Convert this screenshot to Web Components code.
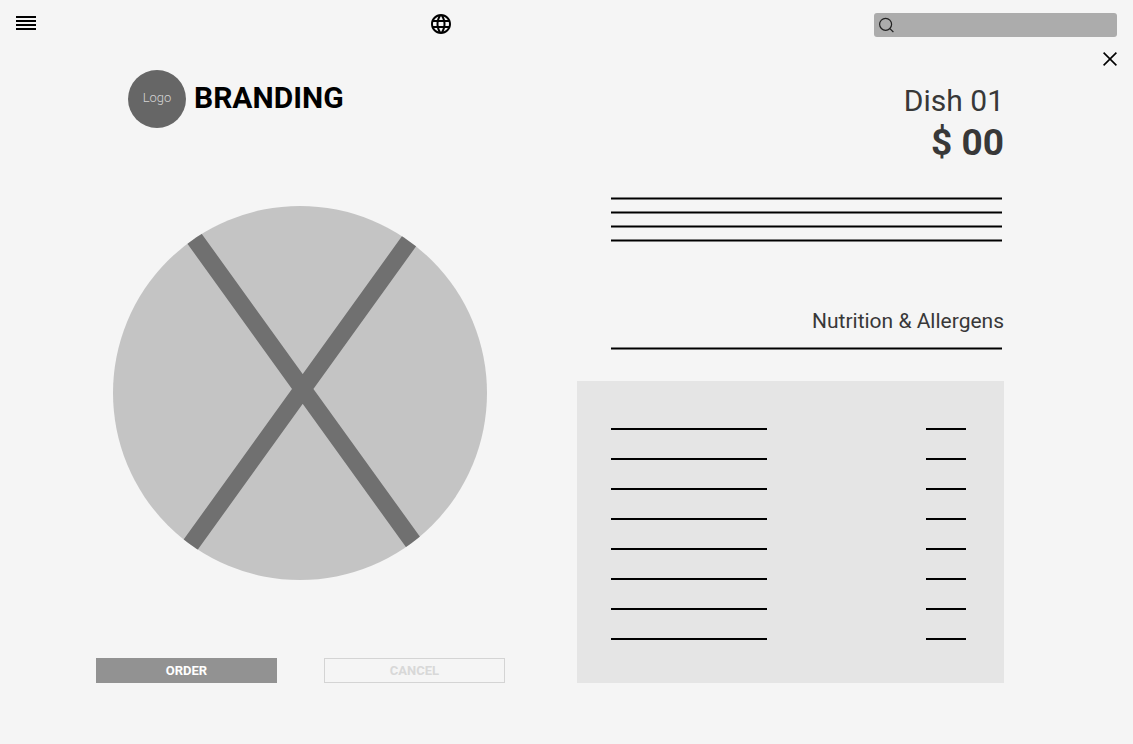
<!DOCTYPE html>
<html lang="en">
<head>
  <meta charset="utf-8">
  <meta name="viewport" content="width=device-width, initial-scale=1">
  <title>Dish 01</title>
  <style>
    body {
      margin: 0;
      background: #f5f5f5;
      color: #383838;
      font-family: Roboto, "Liberation Sans", sans-serif;
    }
  </style>
</head>
<body>
  <dish-page></dish-page>

  <script>
    class TopBar extends HTMLElement {
      constructor() {
        super();
        this.attachShadow({ mode: 'open' });
        this.render();
      }

      render() {
        this.shadowRoot.innerHTML = `
          <style>
            :host {
              display: grid;
              grid-template-columns: 415fr 443fr 243px;
              padding: 13px 16px 0;
            }
            button {
              display: block;
              width: 20px;
              height: 20px;
              padding: 0;
              border: 0;
              background: none;
              color: #000;
              cursor: pointer;
            }
            svg {
              display: block;
            }
            .search {
              display: flex;
              align-items: center;
              gap: 4px;
              height: 24px;
              box-sizing: border-box;
              padding: 0 4px;
              border-radius: 3px;
              background: #acacac;
            }
            input {
              flex: 1;
              min-width: 0;
              padding: 0;
              border: 0;
              outline: 0;
              background: none;
              font: 14px/20px Roboto, sans-serif;
            }
          </style>
          <button type="button" aria-label="Menu">
            <svg width="20" height="20" viewBox="0 0 20 20">
              <path d="M0 3h20v2H0zM0 7h20v2H0zM0 11h20v2H0zM0 15h20v2H0z"/>
            </svg>
          </button>
          <button type="button" aria-label="Language">
            <svg width="20" height="22" viewBox="2 1 20 22">
              <path d="M11.99 2C6.47 2 2 6.48 2 12s4.47 10 9.99 10C17.52 22 22 17.52 22 12S17.52 2 11.99 2zm6.93 6h-2.95a15.65 15.65 0 0 0-1.38-3.56A8.03 8.03 0 0 1 18.92 8zM12 4.04c.83 1.2 1.48 2.53 1.91 3.96h-3.82c.43-1.43 1.08-2.76 1.91-3.96zM4.26 14C4.1 13.36 4 12.69 4 12s.1-1.36.26-2h3.38c-.08.66-.14 1.32-.14 2s.06 1.34.14 2H4.26zm.82 2h2.95c.32 1.25.78 2.45 1.38 3.56A7.99 7.99 0 0 1 5.08 16zm2.95-8H5.08a7.99 7.99 0 0 1 4.33-3.56A15.65 15.65 0 0 0 8.03 8zM12 19.96c-.83-1.2-1.48-2.53-1.91-3.96h3.82c-.43 1.43-1.08 2.76-1.91 3.96zM14.34 14H9.66c-.09-.66-.16-1.32-.16-2s.07-1.35.16-2h4.68c.09.65.16 1.32.16 2s-.07 1.34-.16 2zm.25 5.56c.6-1.11 1.06-2.31 1.38-3.56h2.95a8.03 8.03 0 0 1-4.33 3.56zM16.36 14c.08-.66.14-1.32.14-2s-.06-1.34-.14-2h3.38c.16.64.26 1.31.26 2s-.1 1.36-.26 2h-3.38z"/>
            </svg>
          </button>
          <label class="search">
            <svg width="16" height="16" viewBox="0 0 16 16" fill="none" stroke="#222" stroke-width="1.2">
              <circle cx="7.6" cy="7.3" r="6"/>
              <path d="M11.8 11.6L15.4 15"/>
            </svg>
            <input type="search" aria-label="Search">
          </label>
        `;
      }
    }

    class BrandMark extends HTMLElement {
      constructor() {
        super();
        this.attachShadow({ mode: 'open' });
        this.render();
      }

      render() {
        this.shadowRoot.innerHTML = `
          <style>
            :host {
              display: flex;
              gap: 8px;
              height: 58px;
              padding-left: 32px;
              line-height: 56px;
            }
            .logo {
              width: 58px;
              border-radius: 50%;
              background: #666;
              color: #d4d4d4;
              font-size: 13px;
              font-weight: 300;
              text-align: center;
            }
            .name {
              color: #000;
              font-size: 30px;
              font-weight: 700;
            }
          </style>
          <span class="logo">Logo</span>
          <span class="name"><slot></slot></span>
        `;
      }
    }

    class DishPicture extends HTMLElement {
      constructor() {
        super();
        this.attachShadow({ mode: 'open' });
        this.render();
      }

      render() {
        this.shadowRoot.innerHTML = `
          <style>
            :host {
              display: block;
              padding: 0 17px;
            }
            svg {
              display: block;
              width: 100%;
              max-width: 374px;
            }
          </style>
          <svg viewBox="0 0 374 374" role="img" aria-label="Dish picture">
            <clipPath id="plate"><circle cx="187" cy="187" r="187"/></clipPath>
            <circle cx="187" cy="187" r="187" fill="#c4c4c4"/>
            <path clip-path="url(#plate)" fill="none" stroke="#707070" stroke-width="17.4"
              d="M60.1 3L321.4 365.7M317.6 5.3L56.6 367.9"/>
          </svg>
        `;
      }
    }

    class ActionButton extends HTMLElement {
      constructor() {
        super();
        this.attachShadow({ mode: 'open' });
        this.render();
      }

      render() {
        this.shadowRoot.innerHTML = `
          <style>
            :host {
              display: block;
            }
            button {
              display: block;
              width: 100%;
              height: 25px;
              padding: 0;
              border: 1px solid #929292;
              background: #929292;
              color: #fff;
              font: 700 13px/23px Roboto, "Liberation Sans", sans-serif;
              cursor: pointer;
            }
            :host([outline]) button {
              border-color: #d4d4d4;
              background: none;
              color: #d8d8d8;
            }
          </style>
          <button type="button"><slot></slot></button>
        `;
      }
    }

    // Block of placeholder text lines
    class TextLines extends HTMLElement {
      constructor() {
        super();
        this.attachShadow({ mode: 'open' });
        this.render();
      }

      render() {
        const count = Number(this.getAttribute('count')) || 1;
        this.shadowRoot.innerHTML = `
          <style>
            :host {
              display: grid;
              gap: 11px;
              padding: 0 2px 0 34px;
            }
            .line {
              height: 1px;
              border: solid #7a7a7a;
              border-width: 1px 0;
              background: #000;
            }
          </style>
          ${'<div class="line"></div>'.repeat(count)}
        `;
      }
    }

    class NutritionPanel extends HTMLElement {
      constructor() {
        super();
        this.rows = 8;
        this.attachShadow({ mode: 'open' });
        this.render();
      }

      render() {
        this.shadowRoot.innerHTML = `
          <style>
            :host {
              display: grid;
              gap: 28px;
              padding: 47px 38px 43px 34px;
              background: #e5e5e5;
            }
            .row {
              display: flex;
              justify-content: space-between;
            }
            .label, .value {
              width: 156px;
              height: 2px;
              background: #000;
            }
            .value {
              width: 40px;
            }
          </style>
          ${Array.from({ length: this.rows }, () => this.renderRow()).join('')}
        `;
      }

      renderRow() {
        return `
          <div class="row">
            <span class="label"></span>
            <span class="value"></span>
          </div>
        `;
      }
    }

    class DishPage extends HTMLElement {
      constructor() {
        super();
        this.attachShadow({ mode: 'open' });
        this.render();
      }

      render() {
        this.shadowRoot.innerHTML = `
          <style>
            :host {
              display: block;
            }
            .close {
              display: block;
              margin: 15px 16px 4px auto;
              padding: 0;
              border: 0;
              background: none;
              cursor: pointer;
            }
            svg {
              display: block;
            }
            main {
              display: grid;
              grid-template-columns: 409fr 427fr;
              gap: 72px;
              padding: 0 129px 61px 96px;
            }
            dish-picture {
              margin: 78px 0;
            }
            .actions {
              display: grid;
              grid-template-columns: 1fr 1fr;
              gap: 47px;
            }
            h1, h2, .price {
              margin: 0;
              text-align: right;
            }
            h1 {
              padding-top: 11px;
              font-size: 30px;
              font-weight: 400;
              line-height: 40px;
            }
            .price {
              margin-bottom: 32px;
              font-size: 37px;
              font-weight: 700;
              line-height: 44px;
            }
            h2 {
              margin: 65px 0 12px;
              font-size: 21px;
              font-weight: 400;
              line-height: 28px;
            }
            nutrition-panel {
              margin-top: 31px;
            }
          </style>
          <top-bar></top-bar>
          <button class="close" type="button" aria-label="Close">
            <svg width="14" height="14" viewBox="0 0 14 14" stroke="#000" stroke-width="1.6">
              <path d="M.6 .6l12.8 12.8M13.4 .6L.6 13.4"/>
            </svg>
          </button>
          <main>
            <section>
              <brand-mark>BRANDING</brand-mark>
              <dish-picture></dish-picture>
              <div class="actions">
                <action-button>ORDER</action-button>
                <action-button outline>CANCEL</action-button>
              </div>
            </section>
            <section>
              <h1>Dish 01</h1>
              <p class="price">$ 00</p>
              <text-lines count="4"></text-lines>
              <h2>Nutrition &amp; Allergens</h2>
              <text-lines></text-lines>
              <nutrition-panel></nutrition-panel>
            </section>
          </main>
        `;
      }
    }

    customElements.define('top-bar', TopBar);
    customElements.define('brand-mark', BrandMark);
    customElements.define('dish-picture', DishPicture);
    customElements.define('action-button', ActionButton);
    customElements.define('text-lines', TextLines);
    customElements.define('nutrition-panel', NutritionPanel);
    customElements.define('dish-page', DishPage);
  </script>
</body>
</html>
